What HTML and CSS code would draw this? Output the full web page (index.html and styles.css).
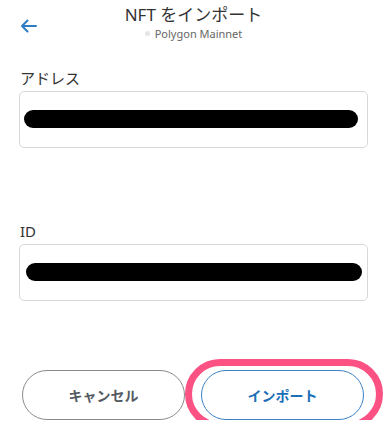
FILE: index.html
```html
<!DOCTYPE html>
<html lang="ja">
<head>
    <meta charset="UTF-8">
    <meta name="viewport" content="width=device-width, initial-scale=1.0">
    <title>NFT をインポート</title>
    <link rel="stylesheet" href="styles.css">
</head>
<body>
    <div class="header">
        <div class="back">
            <svg width="17" height="14" viewBox="0 0 17 14">
                <path d="M16 7H2M7.5 1.5L2 7l5.5 5.5" fill="none" stroke="#2e7cc4" stroke-width="2" stroke-linecap="round" stroke-linejoin="round"/>
            </svg>
        </div>
        <div class="title-box">
            <div class="title">NFT をインポート</div>
            <div class="network"><span class="dot"></span>Polygon Mainnet</div>
        </div>
        <div></div>
    </div>

    <div class="form">
        <div class="field first">
            <div class="label">アドレス</div>
            <div class="input addr"><span class="hidden-value"></span></div>
        </div>
        <div class="field second">
            <div class="label">ID</div>
            <div class="input token"><span class="hidden-value"></span></div>
        </div>
    </div>

    <div class="actions">
        <button class="btn cancel">キャンセル</button>
        <div class="import-wrap">
            <button class="btn import">インポート</button>
            <span class="ring"></span>
        </div>
    </div>
</body>
</html>
```

FILE: styles.css
```css
body {
    margin: 0;
    background: #fff;
    font-family: "Noto Sans", "Noto Sans CJK JP", sans-serif;
    color: #333;
}
.header {
    display: grid;
    grid-template-columns: 60px 1fr 60px;
    height: 46px;
}
.back {
    padding: 19px 0 0 20px;
}
.back svg {
    display: block;
}
.title-box {
    text-align: center;
    padding-top: 4px;
}
.title {
    font-size: 17px;
    line-height: 22px;
    color: #333;
}
.network {
    font-size: 11px;
    line-height: 16px;
    color: #666;
}
.dot {
    display: inline-block;
    width: 5px;
    height: 5px;
    border-radius: 50%;
    background: #e6e6e6;
    margin-right: 5px;
    vertical-align: 2px;
}
.form {
    padding: 0 19px;
}
.field.first {
    margin-top: 22px;
}
.field.second {
    margin-top: 73px;
}
.label {
    font-size: 15px;
    line-height: 20px;
    padding-left: 1px;
    color: #333;
}
.input {
    box-sizing: border-box;
    height: 57px;
    margin-top: 3px;
    border: 1px solid #d8d8d8;
    border-radius: 5px;
    display: flex;
    align-items: center;
}
.input.addr {
    padding: 0 9px 2px 4px;
}
.input.token {
    padding: 0 5px 1px 6px;
}
.hidden-value {
    flex: 1;
    height: 18px;
    border-radius: 9px;
    background: #000;
}
.actions {
    display: grid;
    grid-template-columns: 1fr 1fr;
    gap: 16px;
    padding: 0 23px 0 22px;
    margin-top: 69px;
}
.btn {
    box-sizing: border-box;
    width: 100%;
    height: 50px;
    border-radius: 25px;
    background: #fff;
    font-family: "Noto Sans CJK JP", sans-serif;
    font-size: 14px;
    font-weight: 700;
    cursor: pointer;
}
.cancel {
    border: 1px solid #8a8a8a;
    color: #535a61;
}
.import-wrap {
    position: relative;
}
.import {
    display: block;
    border: 1px solid #3b82c4;
    color: #1b6fb8;
}
.ring {
    position: absolute;
    left: -16px;
    right: -19px;
    top: -11px;
    bottom: -9px;
    border: 7px solid #fb5283;
    border-radius: 36px;
    pointer-events: none;
}
```
